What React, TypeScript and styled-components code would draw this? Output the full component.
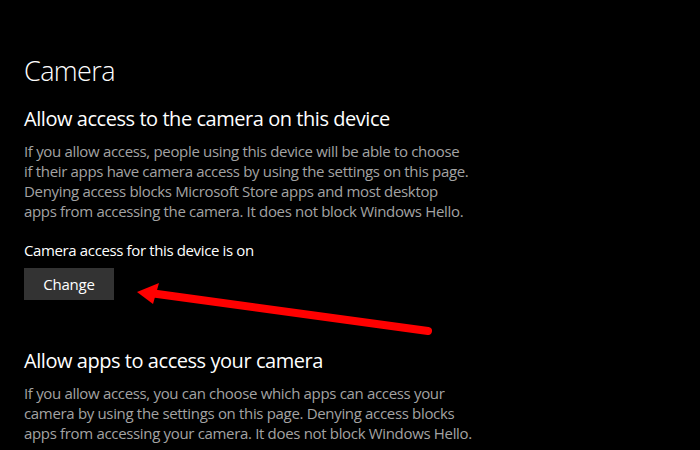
import styled, { createGlobalStyle } from "styled-components";

const GlobalStyle = createGlobalStyle`
  html, body {
    margin: 0;
    padding: 0;
    background: #000;
  }
  body {
    font-family: "Open Sans", "Noto Sans", sans-serif;
  }
`;

const Page = styled.div`
  position: relative;
  width: 700px;
  height: 450px;
  overflow: hidden;
  background: #000;
  padding: 53px 24px 0;
  box-sizing: border-box;
`;

const Title = styled.h1`
  margin: 0 0 16px;
  font-size: 27px;
  line-height: 36px;
  font-weight: 300;
  letter-spacing: -0.6px;
  color: #fff;
`;

const Section = styled.section<{ $gap?: number }>`
  margin-top: ${(p) => p.$gap ?? 0}px;
`;

const Heading = styled.h2`
  margin: 0 0 8px;
  font-size: 20px;
  line-height: 28px;
  font-weight: 400;
  letter-spacing: -0.45px;
  color: #fff;
`;

const Text = styled.p`
  margin: 0;
  font-size: 15px;
  line-height: 20px;
  letter-spacing: -0.33px;
  color: #a3a3a3;
`;

const Status = styled.div`
  margin-top: 19px;
  font-size: 15px;
  line-height: 20px;
  letter-spacing: -0.37px;
  color: #fff;
`;

const Button = styled.button`
  display: flex;
  align-items: center;
  justify-content: center;
  margin-top: 8px;
  width: 90px;
  height: 32px;
  border: none;
  padding: 0;
  background: #333;
  color: #fff;
  font-family: inherit;
  font-size: 15px;
  letter-spacing: -0.2px;
`;

const Arrow = styled.svg`
  position: absolute;
  left: 0;
  top: 0;
  pointer-events: none;
`;

export default function App() {
  return (
    <>
      <GlobalStyle />
      <Page>
        <Title>Camera</Title>
        <Section>
          <Heading>Allow access to the camera on this device</Heading>
          <Text>
            If you allow access, people using this device will be able to choose
            <br />
            if their apps have camera access by using the settings on this page.
            <br />
            Denying access blocks Microsoft Store apps and most desktop
            <br />
            apps from accessing the camera. It does not block Windows Hello.
          </Text>
          <Status>Camera access for this device is on</Status>
          <Button>Change</Button>
        </Section>
        <Section $gap={47}>
          <Heading>Allow apps to access your camera</Heading>
          <Text>
            If you allow access, you can choose which apps can access your
            <br />
            camera by using the settings on this page. Denying access blocks
            <br />
            apps from accessing your camera. It does not block Windows Hello.
          </Text>
        </Section>
        <Arrow width="700" height="450" viewBox="0 0 700 450">
          <line
            x1="428"
            y1="331"
            x2="150"
            y2="293"
            stroke="#f00"
            strokeWidth="8"
            strokeLinecap="round"
          />
          <polygon points="137,292 159,283 153,304" fill="#f00" />
        </Arrow>
      </Page>
    </>
  );
}
